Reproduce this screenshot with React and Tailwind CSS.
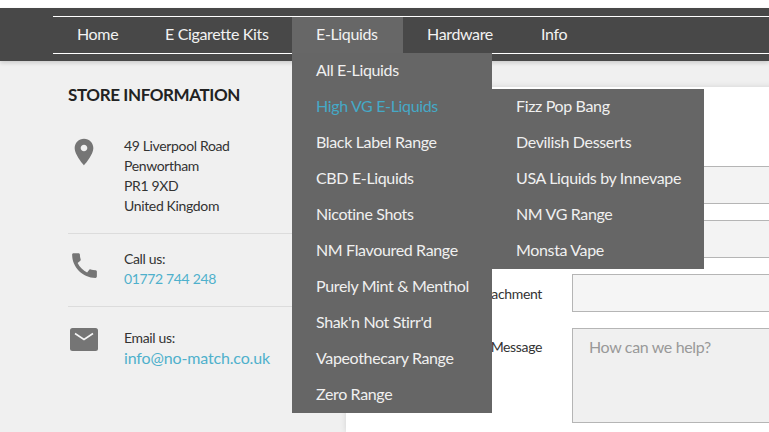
const font = { fontFamily: "Lato, sans-serif" };

const navItems = [
  { label: "Home", width: "w-[88px]" },
  { label: "E Cigarette Kits", width: "w-[151px]" },
  { label: "E-Liquids", width: "w-[111px]", active: true },
  { label: "Hardware", width: "w-[114px]" },
  { label: "Info", width: "w-[80px]" },
];

const mainMenu = [
  "All E-Liquids",
  "High VG E-Liquids",
  "Black Label Range",
  "CBD E-Liquids",
  "Nicotine Shots",
  "NM Flavoured Range",
  "Purely Mint & Menthol",
  "Shak'n Not Stirr'd",
  "Vapeothecary Range",
  "Zero Range",
];

const subMenu = [
  "Fizz Pop Bang",
  "Devilish Desserts",
  "USA Liquids by Innevape",
  "NM VG Range",
  "Monsta Vape",
];

function PinIcon() {
  return (
    <svg width="32" height="32" viewBox="0 0 24 24" fill="#757575">
      <path d="M12 2C8.13 2 5 5.13 5 9c0 5.25 7 13 7 13s7-7.75 7-13c0-3.87-3.13-7-7-7zm0 9.5c-1.38 0-2.5-1.12-2.5-2.5s1.12-2.5 2.5-2.5 2.5 1.12 2.5 2.5-1.12 2.5-2.5 2.5z" />
    </svg>
  );
}

function PhoneIcon() {
  return (
    <svg width="33" height="33" viewBox="0 0 24 24" fill="#757575">
      <path d="M20.01 15.38c-1.23 0-2.42-.2-3.53-.56-.35-.12-.74-.03-1.01.24l-1.57 1.97c-2.83-1.35-5.48-3.9-6.89-6.83l1.95-1.66c.27-.28.35-.67.24-1.02-.37-1.11-.56-2.3-.56-3.53 0-.54-.45-.99-.99-.99H4.19C3.65 3 3 3.24 3 3.99 3 13.28 10.73 21 20.01 21c.71 0 .99-.63.99-1.18v-3.45c0-.54-.45-.99-.99-.99z" />
    </svg>
  );
}

function MailIcon() {
  return (
    <svg width="28" height="23" viewBox="0 0 28 23">
      <rect width="28" height="23" rx="2.5" fill="#757575" />
      <path d="M5 5.5l9 6 9-6" fill="none" stroke="#f5f5f5" strokeWidth="1.6" />
    </svg>
  );
}

function Sidebar() {
  return (
    <aside className="w-[346px] shrink-0 pl-[68px] pr-6 pt-[24px]">
      <h2 className="text-[17px] leading-5 font-bold text-[#222222] tracking-[-0.4px]">STORE INFORMATION</h2>

      <div className="flex mt-[31px] pb-[17px] border-b border-[#dcdcdc]">
        <div className="w-[56px] shrink-0"><PinIcon /></div>
        <div className="text-[14px] leading-5 text-[#333333]">
          <p>49 Liverpool Road</p>
          <p>Penwortham</p>
          <p>PR1 9XD</p>
          <p>United Kingdom</p>
        </div>
      </div>

      <div className="flex pt-[15px] pb-[17px] border-b border-[#dcdcdc]">
        <div className="w-[56px] shrink-0"><PhoneIcon /></div>
        <div className="text-[14px] leading-5 text-[#333333]">
          <p>Call us:</p>
          <p className="text-[#4fb0cc]">01772 744 248</p>
        </div>
      </div>

      <div className="flex pt-[21px]">
        <div className="w-[56px] shrink-0 pl-[2px]"><MailIcon /></div>
        <div className="text-[14px] leading-5 text-[#333333]">
          <p>Email us:</p>
          <p className="text-[16px] text-[#4fb0cc] tracking-[-0.15px]">info@no-match.co.uk</p>
        </div>
      </div>
    </aside>
  );
}

function ContactForm() {
  return (
    <main className="flex-1 bg-white mt-[26px] pt-[79px] shadow-[0_0_6px_rgba(0,0,0,0.12)]">
      <div className="flex flex-col gap-4">
        <div className="ml-[226px] h-[38px] border border-[#b5b5b5] border-r-0 bg-[#f3f3f3]" />
        <div className="ml-[226px] h-[38px] border border-[#b5b5b5] border-r-0 bg-[#f3f3f3]" />
        <div className="flex items-center">
          <label className="w-[196px] text-right text-[14px] text-[#333333]">Attachment</label>
          <div className="ml-[30px] flex-1 h-[38px] border border-[#b5b5b5] border-r-0 bg-[#f5f5f5]" />
        </div>
        <div className="flex items-start">
          <label className="w-[196px] pt-[9px] text-right text-[14px] leading-5 text-[#333333]">Message</label>
          <textarea
            placeholder="How can we help?"
            className="ml-[30px] flex-1 h-[95px] border border-[#b5b5b5] border-r-0 bg-[#f0f0f0] px-4 py-[8px] text-[16px] leading-5 placeholder:text-[#999999] resize-none"
          />
        </div>
      </div>
    </main>
  );
}

export default function App() {
  return (
    <div className="relative w-[769px] h-[432px] overflow-hidden bg-white tracking-[-0.35px]" style={font}>
      <div className="pt-2">
        <header className="relative z-10 h-[53px] pt-2 pl-[53px] bg-[#484848] shadow-[0_2px_4px_rgba(0,0,0,0.15)]">
          <nav className="flex h-[38px] border-y border-white">
            {navItems.map((item) => (
              <a
                key={item.label}
                className={`${item.width} pl-6 pb-[2px] flex items-center text-[16px] text-[#f2f2f2] ${item.active ? "bg-[#676767]" : ""}`}
              >
                {item.label}
              </a>
            ))}
          </nav>
        </header>

        <div className="flex h-[371px] bg-[#f0f0f0]">
          <Sidebar />
          <ContactForm />
        </div>
      </div>

      {/* Dropdown and its flyout */}
      <div className="absolute z-20 left-[292px] top-[53px] w-[200px] bg-[#666666]">
        {mainMenu.map((label, index) => (
          <div
            key={label}
            className={`h-9 pl-6 pb-[2px] flex items-center text-[16px] whitespace-nowrap ${index === 1 ? "text-[#45a9c6]" : "text-[#f0f0f0]"}`}
          >
            {label}
          </div>
        ))}
      </div>
      <div className="absolute z-20 left-[492px] top-[89px] w-[212px] bg-[#666666]">
        {subMenu.map((label) => (
          <div key={label} className="h-9 pl-6 pb-[2px] flex items-center text-[16px] whitespace-nowrap text-[#f0f0f0]">
            {label}
          </div>
        ))}
      </div>
    </div>
  );
}
